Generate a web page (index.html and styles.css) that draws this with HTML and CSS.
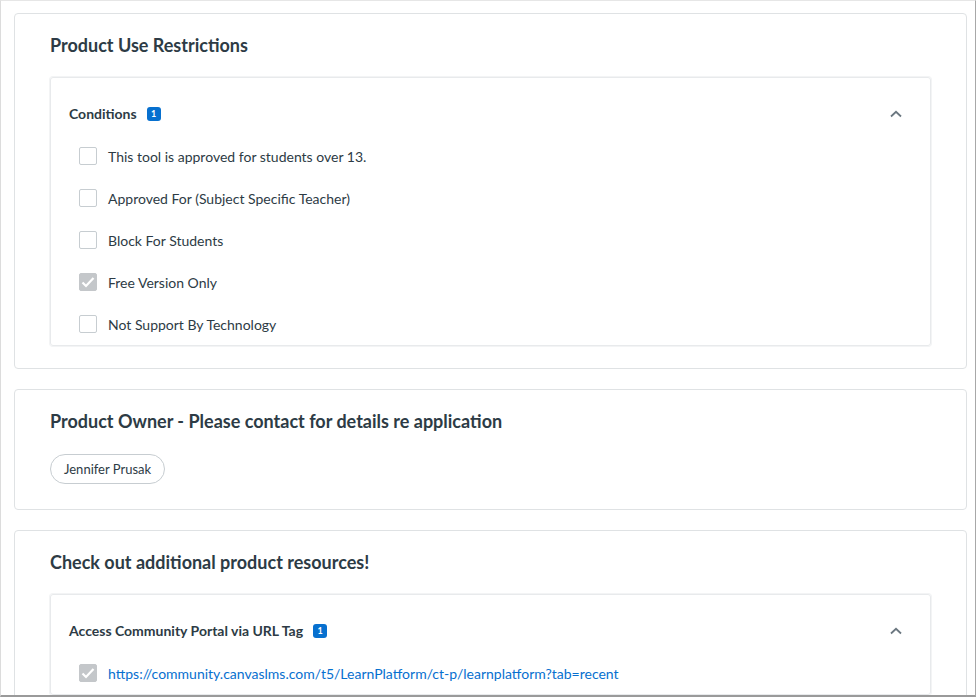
FILE: index.html
```html
<!DOCTYPE html>
<html lang="en">
<head>
    <meta charset="UTF-8">
    <meta name="viewport" content="width=device-width, initial-scale=1.0">
    <title>Product Details</title>
    <link rel="stylesheet" href="styles.css">
</head>
<body>
    <div class="window">
        <section class="card">
            <h2 class="card-title">Product Use Restrictions</h2>
            <div class="panel">
                <div class="panel-header">
                    <span class="panel-name">Conditions</span>
                    <span class="badge">1</span>
                    <svg class="chevron" width="12" height="8" viewBox="0 0 12 8"><path d="M1 6.5 L6 1.8 L11 6.5" fill="none" stroke="#6b7780" stroke-width="1.8"/></svg>
                </div>
                <ul class="options">
                    <li class="option"><span class="box"></span>This tool is approved for students over 13.</li>
                    <li class="option"><span class="box"></span>Approved For (Subject Specific Teacher)</li>
                    <li class="option"><span class="box"></span>Block For Students</li>
                    <li class="option"><span class="box checked"><svg width="14" height="12" viewBox="0 0 14 12"><path d="M1.5 6.5 L5 10 L12.5 2" fill="none" stroke="#fff" stroke-width="2.2"/></svg></span>Free Version Only</li>
                    <li class="option"><span class="box"></span>Not Support By Technology</li>
                </ul>
            </div>
        </section>

        <section class="card owner">
            <h2 class="card-title">Product Owner - Please contact for details re application</h2>
            <span class="chip">Jennifer Prusak</span>
        </section>

        <section class="card">
            <h2 class="card-title">Check out additional product resources!</h2>
            <div class="panel">
                <div class="panel-header">
                    <span class="panel-name">Access Community Portal via URL Tag</span>
                    <span class="badge">1</span>
                    <svg class="chevron" width="12" height="8" viewBox="0 0 12 8"><path d="M1 6.5 L6 1.8 L11 6.5" fill="none" stroke="#6b7780" stroke-width="1.8"/></svg>
                </div>
                <ul class="options">
                    <li class="option"><span class="box checked"><svg width="14" height="12" viewBox="0 0 14 12"><path d="M1.5 6.5 L5 10 L12.5 2" fill="none" stroke="#fff" stroke-width="2.2"/></svg></span><a class="link" href="#">https://community.canvaslms.com/t5/LearnPlatform/ct-p/learnplatform?tab=recent</a></li>
                </ul>
            </div>
        </section>
    </div>
</body>
</html>
```

FILE: styles.css
```css
body {
    margin: 0;
    font-family: Lato, "Noto Sans", sans-serif;
    color: #2d3b45;
    background: #fff;
}
.window {
    width: 976px;
    height: 697px;
    border-top: 1px solid #e6e6e6;
    border-left: 1px solid #dcdcdc;
    border-right: 1px solid #a8a8a8;
    border-bottom: 2px solid #9a9a9a;
    padding: 12px 8px 0 13px;
    box-sizing: border-box;
    overflow: hidden;
}
.card {
    border: 1px solid #dfe2e4;
    border-radius: 4px;
    padding: 18px 35px 22px 35px;
    margin-bottom: 20px;
}
.card.owner {
    padding-bottom: 25px;
}
.card-title {
    margin: 0 0 19px 0;
    font-size: 18px;
    line-height: 26px;
    font-weight: 700;
}
.owner .card-title {
    margin-bottom: 20px;
}
.panel {
    border: 1px solid #e8eaec;
    border-radius: 3px;
    box-shadow: 0 0 0 1px #f3f4f5;
}
.panel-header {
    display: flex;
    align-items: center;
    padding: 26px 28px 0 18px;
    height: 20px;
}
.panel-name {
    font-size: 14px;
    font-weight: 700;
    line-height: 20px;
}
.badge {
    margin-left: 10px;
    width: 14px;
    height: 14px;
    border-radius: 3px;
    background: #0770cf;
    color: #fff;
    font-size: 9px;
    font-weight: 700;
    line-height: 14px;
    text-align: center;
}
.chevron {
    margin-left: auto;
}
.options {
    list-style: none;
    margin: 11px 0 0 0;
    padding: 0 0 0 28px;
}
.option {
    display: flex;
    align-items: center;
    height: 42px;
    font-size: 14px;
}
.box {
    width: 16px;
    height: 16px;
    border: 1px solid #c7cdd1;
    border-radius: 2px;
    margin-right: 11px;
    display: flex;
    align-items: center;
    justify-content: center;
    flex-shrink: 0;
}
.box.checked {
    background: #c4c7ca;
    border-color: #c4c7ca;
}
.link {
    color: #0770cf;
    text-decoration: none;
}
.chip {
    display: inline-block;
    height: 28px;
    line-height: 28px;
    padding: 0 13px;
    border: 1px solid #c7cdd1;
    border-radius: 15px;
    font-size: 13px;
}
```
